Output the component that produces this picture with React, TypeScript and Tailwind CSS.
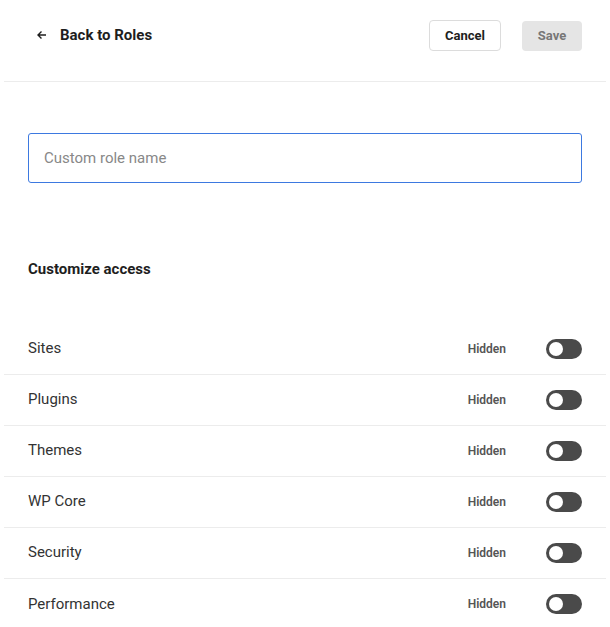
export default function App() {
  const rows = ["Sites", "Plugins", "Themes", "WP Core", "Security", "Performance"];
  return (
    <div className="min-h-screen bg-white px-1 font-[Roboto,sans-serif] text-[#1e1e1e]">
      <div className="flex h-[82px] items-start justify-between border-b border-[#ececec] px-6 pt-5">
        <div className="flex h-[30px] items-center gap-3 pl-2">
          <svg width="12" height="12" viewBox="0 0 12 12" fill="none" stroke="#1e1e1e" strokeWidth="1.4">
            <path d="M10 6H2M5.5 2.5L2 6l3.5 3.5" />
          </svg>
          <span className="text-[15px] font-bold">Back to Roles</span>
        </div>
        <div className="flex items-center gap-[21px]">
          <button className="h-[31px] w-[72px] rounded-[4px] border border-[#dcdcdc] bg-white text-[13px] font-bold">Cancel</button>
          <button className="h-[30px] w-[60px] rounded-[4px] bg-[#e5e5e5] text-[13px] font-bold text-[#777]">Save</button>
        </div>
      </div>
      <div className="px-6 pt-[51px]">
        <div className="flex h-[50px] items-center rounded-[3px] border border-[#3d79e0] px-[15px] text-[15px] text-[#888]">
          Custom role name
        </div>
        <h2 className="mt-[75px] text-[15px] font-bold">Customize access</h2>
      </div>
      <div className="mt-[43px]">
        {rows.map((r, i) => (
          <div
            key={r}
            className={`flex h-[51px] items-center justify-between px-6 ${i < rows.length - 1 ? "border-b border-[#ececec]" : ""}`}
          >
            <span className="text-[15px] text-[#333]">{r}</span>
            <div className="flex items-center gap-10">
              <span className="text-[12px] font-semibold text-[#555]">Hidden</span>
              <div className="flex h-5 w-9 items-center rounded-full bg-[#4a4a4a] px-[3px]">
                <div className="h-[14px] w-[14px] rounded-full bg-white" />
              </div>
            </div>
          </div>
        ))}
      </div>
    </div>
  );
}
